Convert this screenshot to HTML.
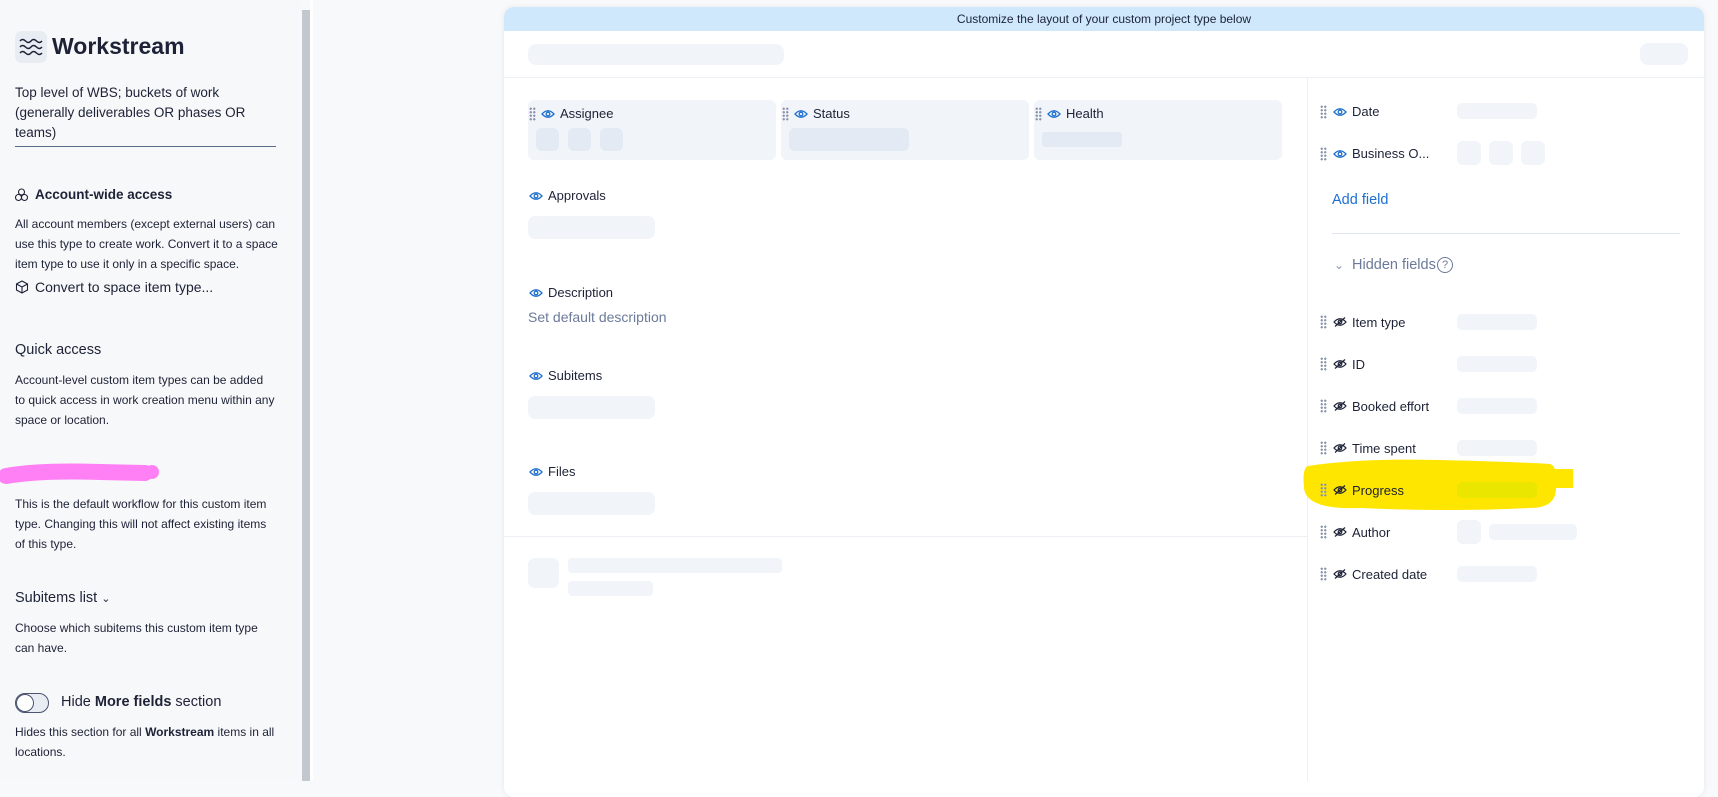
<!DOCTYPE html>
<html><head><meta charset="utf-8"><style>
*{box-sizing:border-box;margin:0;padding:0}
body{width:1718px;height:781px;overflow:hidden;background:#f8f9fb;font-family:"Liberation Sans",sans-serif;color:#1d2236;position:relative}
.a{position:absolute}
.t{position:absolute;white-space:nowrap;line-height:1}
.sk{position:absolute;background:#f1f4f9;border-radius:5px}
.sk2{position:absolute;background:#e4eaf3;border-radius:5px}
.box{position:absolute;background:#f1f4f9;border-radius:6px}
.dh{position:absolute;width:7px;height:14px;background-image:radial-gradient(circle,#8a93ab 1px,transparent 1.3px);background-size:3.5px 3.5px}
</style></head><body>
<!-- sidebar -->
<div class="a" style="left:0;top:0;width:302px;height:781px;background:#f7f8fa"></div>
<div class="a" style="left:302px;top:10px;width:8px;height:771px;background:#c3c8cf"></div>
<div class="a" style="left:310px;top:0;width:3px;height:781px;background:#fff"></div>
<div class="a" style="left:15px;top:31px;width:32px;height:32px;background:#e8ecf3;border-radius:7px"></div>
<svg class="a" style="left:18px;top:36px" width="26" height="22" viewBox="0 0 26 22" fill="none" stroke="#1d2236" stroke-width="1.4"><path d="M2 5q2.5-3 5.5 0t5.5 0 5.5 0 5.5 0"/><path d="M2 11q2.5-3 5.5 0t5.5 0 5.5 0 5.5 0"/><path d="M2 17q2.5-3 5.5 0t5.5 0 5.5 0 5.5 0"/></svg>
<div class="t" style="left:52px;top:35px;font-size:23px;font-weight:bold">Workstream</div>
<div class="t" style="left:15px;top:83px;font-size:13.5px;line-height:20px">Top level of WBS; buckets of work<br>(generally deliverables OR phases OR<br>teams)</div>
<div class="a" style="left:15px;top:146px;width:261px;height:1px;background:#5a6a8a"></div>
<svg class="a" style="left:15px;top:188px" width="13" height="14" viewBox="0 0 13 14" fill="none" stroke="#1d2236" stroke-width="1.1"><circle cx="6.5" cy="4" r="3"/><circle cx="3.5" cy="9.5" r="3"/><circle cx="9.5" cy="9.5" r="3"/></svg>
<div class="t" style="left:35px;top:188px;font-size:13.5px;font-weight:bold">Account-wide access</div>
<div class="t" style="left:15px;top:214px;font-size:12px;line-height:20px">All account members (except external users) can<br>use this type to create work. Convert it to a space<br>item type to use it only in a specific space.</div>
<svg class="a" style="left:15px;top:280px" width="14" height="14" viewBox="0 0 14 14" fill="none" stroke="#1d2236" stroke-width="1.1"><path d="M7 1l5.5 3v6L7 13 1.5 10V4zM1.5 4L7 7l5.5-3M7 7v6"/></svg>
<div class="t" style="left:35px;top:280px;font-size:14px">Convert to space item type...</div>
<div class="t" style="left:15px;top:343px;font-size:14.5px">Quick access</div>
<div class="t" style="left:15px;top:370px;font-size:12px;line-height:20px">Account-level custom item types can be added<br>to quick access in work creation menu within any<br>space or location.</div>
<svg class="a" style="left:0;top:462px" width="162" height="28"><path d="M6 14 Q40 8 100 10 L145 11" stroke="#ff80f5" stroke-width="16" stroke-linecap="round" fill="none"/><circle cx="152" cy="10" r="7" fill="#ff80f5"/></svg>
<div class="t" style="left:15px;top:494px;font-size:12px;line-height:20px">This is the default workflow for this custom item<br>type. Changing this will not affect existing items<br>of this type.</div>
<div class="t" style="left:15px;top:591px;font-size:14.5px">Subitems list <span style="font-size:11px">&#8964;</span></div>
<div class="t" style="left:15px;top:618px;font-size:12px;line-height:20px">Choose which subitems this custom item type<br>can have.</div>
<div class="a" style="left:15px;top:693px;width:34px;height:20px;border:1.5px solid #4a5470;border-radius:10px;background:#e8ecf3"></div>
<div class="a" style="left:16px;top:694px;width:18px;height:18px;border:1.5px solid #4a5470;border-radius:50%;background:#fff"></div>
<div class="t" style="left:61px;top:695px;font-size:14.5px">Hide <b>More fields</b> section</div>
<div class="t" style="left:15px;top:722px;font-size:12px;line-height:20px">Hides this section for all <b>Workstream</b> items in all<br>locations.</div>

<!-- card -->
<div class="a" style="left:504px;top:7px;width:1200px;height:790px;background:#fff;border-radius:10px;box-shadow:0 0 6px rgba(0,0,0,.08);overflow:hidden">
<div class="a" style="left:0;top:0;width:1200px;height:24px;background:#cfe8fc"></div>
<div class="t" style="left:0;width:1200px;text-align:center;top:6px;font-size:12px">Customize the layout of your custom project type below</div>
</div>
<div class="sk" style="left:528px;top:44px;width:256px;height:21px;border-radius:8px"></div>
<div class="sk" style="left:1640px;top:43px;width:48px;height:22px;border-radius:8px"></div>
<div class="a" style="left:504px;top:77px;width:1200px;height:1px;background:#eceff4"></div>
<div class="a" style="left:1307px;top:78px;width:1px;height:703px;background:#eceff4"></div>

<svg width="0" height="0" style="position:absolute"><defs>
<symbol id="eye" viewBox="0 0 14 10"><path d="M1 5Q7-1.5 13 5Q7 11.5 1 5Z" fill="none" stroke="#1f6fd0" stroke-width="1.3"/><circle cx="7" cy="5" r="1.8" fill="none" stroke="#1f6fd0" stroke-width="1.3"/></symbol>
<symbol id="neye" viewBox="0 0 14 10"><path d="M1 5Q7-1.5 13 5Q7 11.5 1 5Z" fill="none" stroke="#1d2236" stroke-width="1.2"/><circle cx="7" cy="5" r="1.8" fill="none" stroke="#1d2236" stroke-width="1.2"/><path d="M2 9.5L12 .5" stroke="#1d2236" stroke-width="1.2"/></symbol>
</defs></svg>

<!-- top field boxes -->
<div class="box" style="left:528px;top:100px;width:248px;height:60px"></div>
<div class="box" style="left:781px;top:100px;width:248px;height:60px"></div>
<div class="box" style="left:1034px;top:100px;width:248px;height:60px"></div>
<div class="dh" style="left:529px;top:107px"></div><svg class="a" style="left:541px;top:109px" width="14" height="10"><use href="#eye"/></svg><div class="t" style="left:560px;top:107px;font-size:13px">Assignee</div>
<div class="dh" style="left:782px;top:107px"></div><svg class="a" style="left:794px;top:109px" width="14" height="10"><use href="#eye"/></svg><div class="t" style="left:813px;top:107px;font-size:13px">Status</div>
<div class="dh" style="left:1035px;top:107px"></div><svg class="a" style="left:1047px;top:109px" width="14" height="10"><use href="#eye"/></svg><div class="t" style="left:1066px;top:107px;font-size:13px">Health</div>
<div class="sk2" style="left:536px;top:128px;width:23px;height:23px;border-radius:6px"></div>
<div class="sk2" style="left:568px;top:128px;width:23px;height:23px;border-radius:6px"></div>
<div class="sk2" style="left:600px;top:128px;width:23px;height:23px;border-radius:6px"></div>
<div class="sk2" style="left:789px;top:128px;width:120px;height:23px;border-radius:6px"></div>
<div class="sk2" style="left:1042px;top:132px;width:80px;height:15px;border-radius:3px"></div>

<svg class="a" style="left:529px;top:191px" width="14" height="10"><use href="#eye"/></svg><div class="t" style="left:548px;top:189px;font-size:13px">Approvals</div>
<div class="sk" style="left:528px;top:216px;width:127px;height:23px;border-radius:7px"></div>
<svg class="a" style="left:529px;top:288px" width="14" height="10"><use href="#eye"/></svg><div class="t" style="left:548px;top:286px;font-size:13px">Description</div>
<div class="t" style="left:528px;top:310px;font-size:14px;color:#6b7a99">Set default description</div>
<svg class="a" style="left:529px;top:371px" width="14" height="10"><use href="#eye"/></svg><div class="t" style="left:548px;top:369px;font-size:13px">Subitems</div>
<div class="sk" style="left:528px;top:396px;width:127px;height:23px;border-radius:7px"></div>
<svg class="a" style="left:529px;top:467px" width="14" height="10"><use href="#eye"/></svg><div class="t" style="left:548px;top:465px;font-size:13px">Files</div>
<div class="sk" style="left:528px;top:492px;width:127px;height:23px;border-radius:7px"></div>
<div class="a" style="left:504px;top:536px;width:803px;height:1px;background:#eceff4"></div>
<div class="sk" style="left:528px;top:558px;width:31px;height:30px;border-radius:7px"></div>
<div class="sk" style="left:568px;top:558px;width:214px;height:15px;border-radius:4px"></div>
<div class="sk" style="left:568px;top:581px;width:85px;height:15px;border-radius:4px"></div>

<!-- right panel -->
<div class="dh" style="left:1320px;top:105px"></div><svg class="a" style="left:1333px;top:107px" width="14" height="10"><use href="#eye"/></svg><div class="t" style="left:1352px;top:105px;font-size:13px">Date</div>
<div class="sk" style="left:1457px;top:103px;width:80px;height:16px"></div>
<div class="dh" style="left:1320px;top:147px"></div><svg class="a" style="left:1333px;top:149px" width="14" height="10"><use href="#eye"/></svg><div class="t" style="left:1352px;top:147px;font-size:13px">Business O...</div>
<div class="sk" style="left:1457px;top:141px;width:24px;height:24px;border-radius:6px"></div>
<div class="sk" style="left:1489px;top:141px;width:24px;height:24px;border-radius:6px"></div>
<div class="sk" style="left:1521px;top:141px;width:24px;height:24px;border-radius:6px"></div>
<div class="t" style="left:1332px;top:193px;font-size:14.5px;color:#1f6fd0">Add field</div>
<div class="a" style="left:1332px;top:233px;width:348px;height:1px;background:#e2e6ee"></div>
<div class="t" style="left:1334px;top:259px;font-size:12px;color:#8a96b0">&#8964;</div>
<div class="t" style="left:1352px;top:258px;font-size:14.5px;color:#6b7a99">Hidden fields</div>
<div class="a" style="left:1437px;top:257px;width:16px;height:16px;border:1.3px solid #6b7a99;border-radius:50%;font-size:11px;color:#6b7a99;text-align:center;line-height:14px">?</div>

<!-- yellow highlight -->
<svg class="a" style="left:1300px;top:458px" width="276" height="54"><path d="M8 8Q60 0 140 2T250 6Q258 8 256 30Q256 50 230 50Q150 54 60 50Q6 52 4 30Q2 10 8 8Z" fill="#ffe600"/><rect x="252" y="11" width="21" height="19" fill="#ffe600"/></svg>

<div class="dh" style="left:1320px;top:315px"></div><svg class="a" style="left:1333px;top:317px" width="14" height="10"><use href="#neye"/></svg><div class="t" style="left:1352px;top:316px;font-size:13px">Item type</div>
<div class="sk" style="left:1457px;top:314px;width:80px;height:16px"></div>
<div class="dh" style="left:1320px;top:357px"></div><svg class="a" style="left:1333px;top:359px" width="14" height="10"><use href="#neye"/></svg><div class="t" style="left:1352px;top:358px;font-size:13px">ID</div>
<div class="sk" style="left:1457px;top:356px;width:80px;height:16px"></div>
<div class="dh" style="left:1320px;top:399px"></div><svg class="a" style="left:1333px;top:401px" width="14" height="10"><use href="#neye"/></svg><div class="t" style="left:1352px;top:400px;font-size:13px">Booked effort</div>
<div class="sk" style="left:1457px;top:398px;width:80px;height:16px"></div>
<div class="dh" style="left:1320px;top:441px"></div><svg class="a" style="left:1333px;top:443px" width="14" height="10"><use href="#neye"/></svg><div class="t" style="left:1352px;top:442px;font-size:13px">Time spent</div>
<div class="sk" style="left:1457px;top:440px;width:80px;height:16px"></div>
<div class="dh" style="left:1320px;top:483px"></div><svg class="a" style="left:1333px;top:485px" width="14" height="10"><use href="#neye"/></svg><div class="t" style="left:1352px;top:484px;font-size:13px">Progress</div>
<div class="sk" style="left:1457px;top:482px;width:80px;height:16px;background:#eae600"></div>
<div class="dh" style="left:1320px;top:525px"></div><svg class="a" style="left:1333px;top:527px" width="14" height="10"><use href="#neye"/></svg><div class="t" style="left:1352px;top:526px;font-size:13px">Author</div>
<div class="sk" style="left:1457px;top:520px;width:24px;height:24px;border-radius:6px"></div>
<div class="sk" style="left:1489px;top:524px;width:88px;height:16px"></div>
<div class="dh" style="left:1320px;top:567px"></div><svg class="a" style="left:1333px;top:569px" width="14" height="10"><use href="#neye"/></svg><div class="t" style="left:1352px;top:568px;font-size:13px">Created date</div>
<div class="sk" style="left:1457px;top:566px;width:80px;height:16px"></div>
</body></html>
